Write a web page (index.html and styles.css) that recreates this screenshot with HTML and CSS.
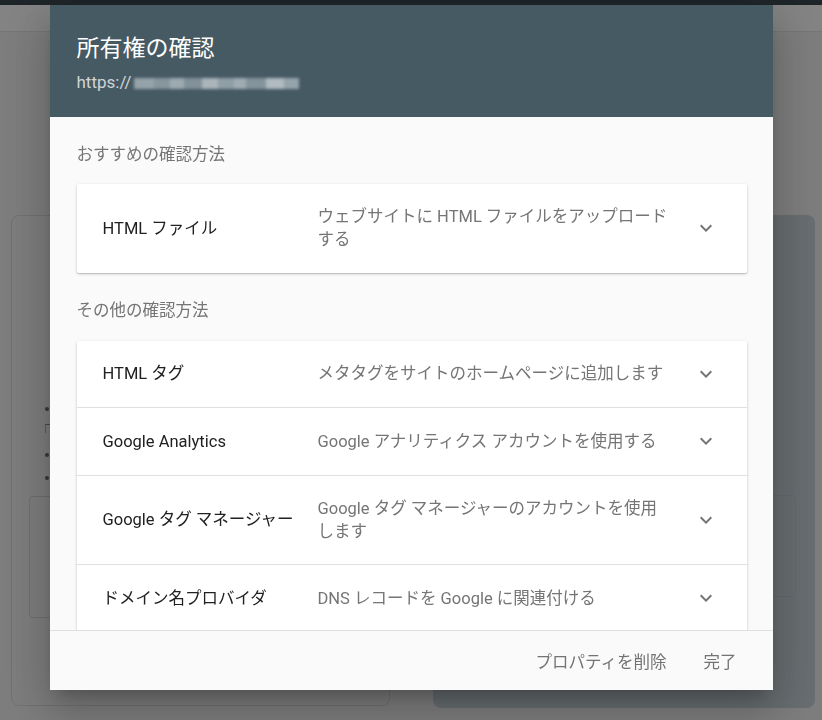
FILE: index.html
```html
<!DOCTYPE html>
<html lang="ja">
<head>
  <meta charset="UTF-8" />
  <meta name="viewport" content="width=device-width, initial-scale=1" />
  <title>所有権の確認</title>
  <link rel="stylesheet" href="styles.css">
</head>
<body>

  <!-- Página de fondo -->
  <div class="topbar"></div>
  <div class="tabs"></div>

  <div class="page">
    <div class="bg-card left">
      <div class="bg-lines">
        <div class="bg-line"><span class="bg-dot"></span></div>
        <div class="bg-line"><span class="bg-mark"></span></div>
        <div class="bg-line"><span class="bg-dot"></span></div>
        <div class="bg-line"><span class="bg-dot"></span></div>
      </div>
      <div class="bg-box"></div>
    </div>
    <div class="bg-card right">
      <div class="bg-box"></div>
    </div>
  </div>

  <!-- Diálogo -->
  <div class="scrim">
    <div class="dialog">
      <div class="dialog-header">
        <h1>所有権の確認</h1>
        <p class="url">https://<span class="url-mask"></span></p>
      </div>

      <div class="dialog-body">
        <h2>おすすめの確認方法</h2>
        <div class="method-card">
          <div class="method-row">
            <span class="method-name">HTML ファイル</span>
            <span class="method-desc">ウェブサイトに HTML ファイルをアップロードする</span>
            <svg class="chevron" viewBox="0 0 24 24"><path d="M16.59 8.59L12 13.17 7.41 8.59 6 10l6 6 6-6z"/></svg>
          </div>
        </div>

        <h2>その他の確認方法</h2>
        <div class="method-card">
          <div class="method-row">
            <span class="method-name">HTML タグ</span>
            <span class="method-desc">メタタグをサイトのホームページに追加します</span>
            <svg class="chevron" viewBox="0 0 24 24"><path d="M16.59 8.59L12 13.17 7.41 8.59 6 10l6 6 6-6z"/></svg>
          </div>
          <div class="method-row">
            <span class="method-name">Google Analytics</span>
            <span class="method-desc">Google アナリティクス アカウントを使用する</span>
            <svg class="chevron" viewBox="0 0 24 24"><path d="M16.59 8.59L12 13.17 7.41 8.59 6 10l6 6 6-6z"/></svg>
          </div>
          <div class="method-row">
            <span class="method-name">Google タグ マネージャー</span>
            <span class="method-desc">Google タグ マネージャーのアカウントを使用します</span>
            <svg class="chevron" viewBox="0 0 24 24"><path d="M16.59 8.59L12 13.17 7.41 8.59 6 10l6 6 6-6z"/></svg>
          </div>
          <div class="method-row">
            <span class="method-name">ドメイン名プロバイダ</span>
            <span class="method-desc">DNS レコードを Google に関連付ける</span>
            <svg class="chevron" viewBox="0 0 24 24"><path d="M16.59 8.59L12 13.17 7.41 8.59 6 10l6 6 6-6z"/></svg>
          </div>
        </div>
      </div>

      <div class="dialog-footer">
        <button class="text-btn">プロパティを削除</button>
        <button class="text-btn">完了</button>
      </div>
    </div>
  </div>

</body>
</html>
```

FILE: styles.css
```css
body {
  font-family: Roboto, "Noto Sans CJK JP", sans-serif;
  background-color: #f0f0f0;
  margin: 0;
  overflow: hidden;
  height: 720px;
}

/* Fondo */
.topbar {
  height: 5px;
  background-color: #3a474f;
}

.tabs {
  height: 26px;
  background-color: #fbfbfb;
  border-bottom: 1px solid #e2e2e2;
}

.page {
  display: flex;
  gap: 43px;
  padding: 183px 0 0 11px;
}

.bg-card {
  box-sizing: border-box;
  border-radius: 8px;
}

.bg-card.left {
  width: 379px;
  height: 491px;
  border: 1px solid #d8d8d8;
  padding: 181px 0 0 17px;
}

.bg-card.right {
  width: 382px;
  height: 493px;
  background-color: #c6d1d7;
  padding: 280px 19px 0 0;
  display: flex;
  justify-content: flex-end;
}

.bg-lines {
  padding-left: 16px;
  margin-bottom: 7px;
}

.bg-line {
  height: 23px;
  display: flex;
  align-items: center;
}

.bg-dot {
  width: 4px;
  height: 4px;
  border-radius: 50%;
  background-color: #6a6a6a;
}

.bg-mark {
  width: 8px;
  height: 8px;
  margin-top: -6px;
  border-top: 1px solid #8a8a8a;
  border-left: 1px solid #b0b0b0;
}

.bg-card.left .bg-box {
  width: 340px;
  height: 120px;
  border: 1px solid #d4d4d4;
  border-radius: 4px;
}

.bg-card.right .bg-box {
  width: 200px;
  height: 100px;
  border: 1px solid #bcc8ce;
  border-radius: 4px;
}

/* Scrim + diálogo */
.scrim {
  position: fixed;
  inset: 0;
  background-color: rgba(0,0,0,0.48);
  display: flex;
  justify-content: center;
  align-items: flex-start;
  padding-top: 5px;
}

.dialog {
  width: 723px;
  height: 685px;
  background-color: #fafafa;
  display: flex;
  flex-direction: column;
  box-shadow: 0 11px 15px -7px rgba(0,0,0,0.2),
              0 24px 38px 3px rgba(0,0,0,0.14),
              0 9px 46px 8px rgba(0,0,0,0.12);
}

.dialog-header {
  background-color: #465a64;
  height: 112px;
  box-sizing: border-box;
  padding: 29px 27px 0;
}

.dialog-header h1 {
  margin: 0;
  font-size: 23px;
  line-height: 30px;
  font-weight: 400;
  color: #fff;
}

.url {
  margin: 7px 0 0;
  font-size: 17px;
  line-height: 22px;
  color: rgba(255,255,255,0.75);
  display: flex;
  align-items: center;
}

.url-mask {
  display: inline-block;
  width: 165px;
  height: 11px;
  margin-left: 2px;
  margin-top: 3px;
  filter: blur(1.5px);
  background: linear-gradient(to right,
    #95a2a9 0, #95a2a9 20px, #87959d 20px, #87959d 36px,
    #9daab0 36px, #9daab0 50px, #82919a 50px, #82919a 68px,
    #aab4ba 68px, #aab4ba 84px, #909ea6 84px, #909ea6 100px,
    #a0acb2 100px, #a0acb2 112px, #85949c 112px, #85949c 132px,
    #b0bac0 132px, #b0bac0 150px, #96a3aa 150px, #96a3aa 165px);
}

.dialog-body {
  flex: 1;
  overflow: hidden;
  padding: 27px 26px 0 27px;
}

.dialog-body h2 {
  margin: 0 0 18px;
  font-size: 16.5px;
  line-height: 22px;
  font-weight: 400;
  color: #757575;
}

.method-card {
  background-color: #fff;
  border-radius: 2px;
  box-shadow: 0 1px 3px rgba(0,0,0,0.22), 0 1px 1px rgba(0,0,0,0.1);
  margin-bottom: 27px;
}

.method-card + h2 {
  margin-bottom: 19px;
}

.method-row {
  display: flex;
  align-items: center;
  padding: 21px 29px 21.5px 26px;
  font-size: 16.5px;
  line-height: 23px;
}

.method-row + .method-row {
  border-top: 1px solid #e0e0e0;
}

.method-name {
  width: 215px;
  flex-shrink: 0;
  color: #212121;
}

.method-desc {
  width: 350px;
  flex-shrink: 0;
  color: #757575;
}

.chevron {
  width: 24px;
  height: 24px;
  margin-left: auto;
  fill: #757575;
}

.dialog-footer {
  height: 60px;
  box-sizing: border-box;
  border-top: 1px solid #e0e0e0;
  display: flex;
  justify-content: flex-end;
  align-items: center;
  gap: 21px;
  padding-right: 28px;
}

.text-btn {
  font-family: inherit;
  font-size: 16.5px;
  background: none;
  border: none;
  padding: 8px;
  color: #737373;
  cursor: pointer;
}
```
